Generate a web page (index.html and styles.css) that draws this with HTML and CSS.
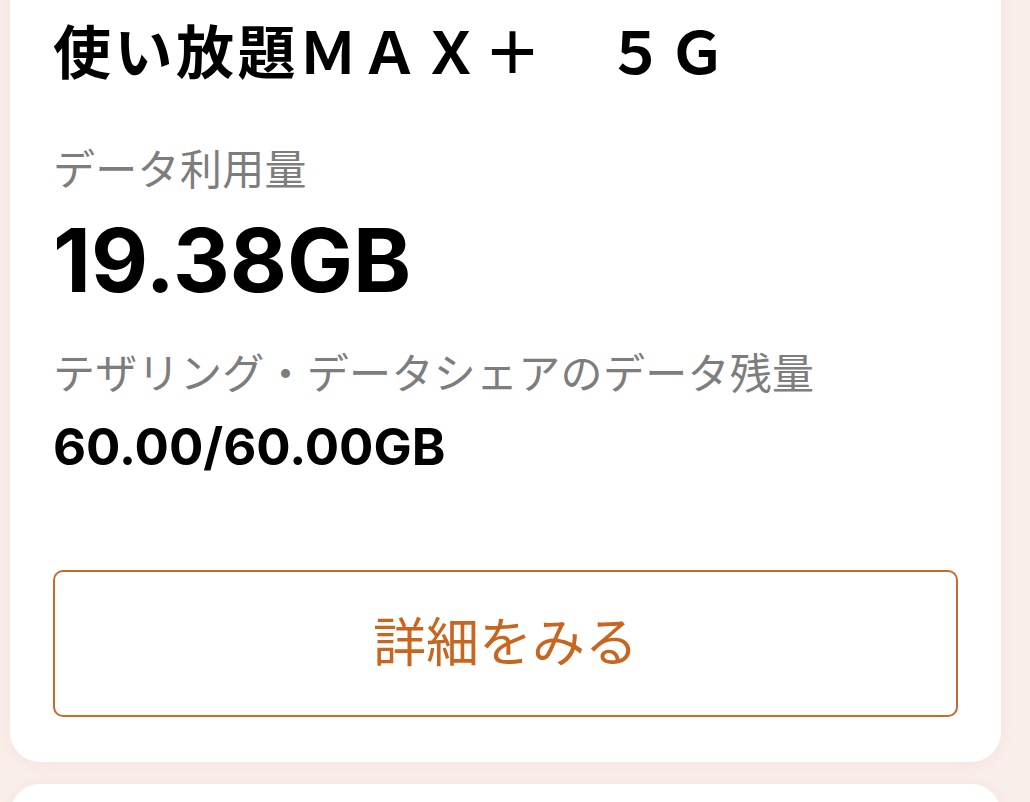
FILE: index.html
```html
<!DOCTYPE html>
<html lang="ja">

<head>
    <meta charset="UTF-8">
    <meta name="viewport" content="width=device-width, initial-scale=1.0">
    <title>データ利用量</title>
    <link rel="stylesheet" href="styles.css">
</head>

<body>
    <div class="page">
        <!-- プランカード -->
        <div class="card">
            <h2 class="plan">使い放題ＭＡＸ＋　５Ｇ</h2>
            <p class="label">データ利用量</p>
            <p class="usage">19.38GB</p>
            <p class="label label-share">テザリング・データシェアのデータ残量</p>
            <p class="remain">60.00/60.00GB</p>
            <a href="#" class="btn">詳細をみる</a>
        </div>
        <div class="card card-next"></div>
    </div>
</body>

</html>
```

FILE: styles.css
```css
* {
    margin: 0;
    padding: 0;
    box-sizing: border-box;
}

body {
    background-color: #f9eeea;
    font-family: "Noto Sans CJK JP", "Noto Sans", sans-serif;
    color: #000;
    overflow: hidden;
}

.page {
    display: flex;
    flex-direction: column;
    gap: 22px;
    padding: 0 29px 0 10px;
    margin-top: -43px;
}

.card {
    background-color: #fff;
    border-radius: 30px;
    padding: 63px 43px 45px;
    box-shadow: 0 2px 14px rgba(210, 150, 130, 0.12);
}

.card-next {
    height: 200px;
}

.plan {
    font-size: 58px;
    line-height: 1;
    font-weight: 700;
    letter-spacing: 3.5px;
}

.label {
    margin-top: 68px;
    font-size: 42px;
    line-height: 1;
    color: #7d7d7d;
    letter-spacing: 0.3px;
}

.usage {
    margin-top: 28px;
    font-family: Inter, "Liberation Sans", sans-serif;
    font-size: 88px;
    line-height: 1;
    font-weight: 700;
}

.label-share {
    margin-top: 46px;
}

.remain {
    margin-top: 29px;
    font-family: Inter, "Liberation Sans", sans-serif;
    font-size: 51px;
    line-height: 1;
    font-weight: 700;
}

.btn {
    display: flex;
    align-items: center;
    justify-content: center;
    height: 147px;
    margin-top: 98px;
    padding-bottom: 10px;
    border: 2px solid #c86a2e;
    border-radius: 10px;
    font-size: 53px;
    color: #c8661f;
    text-decoration: none;
}
```
